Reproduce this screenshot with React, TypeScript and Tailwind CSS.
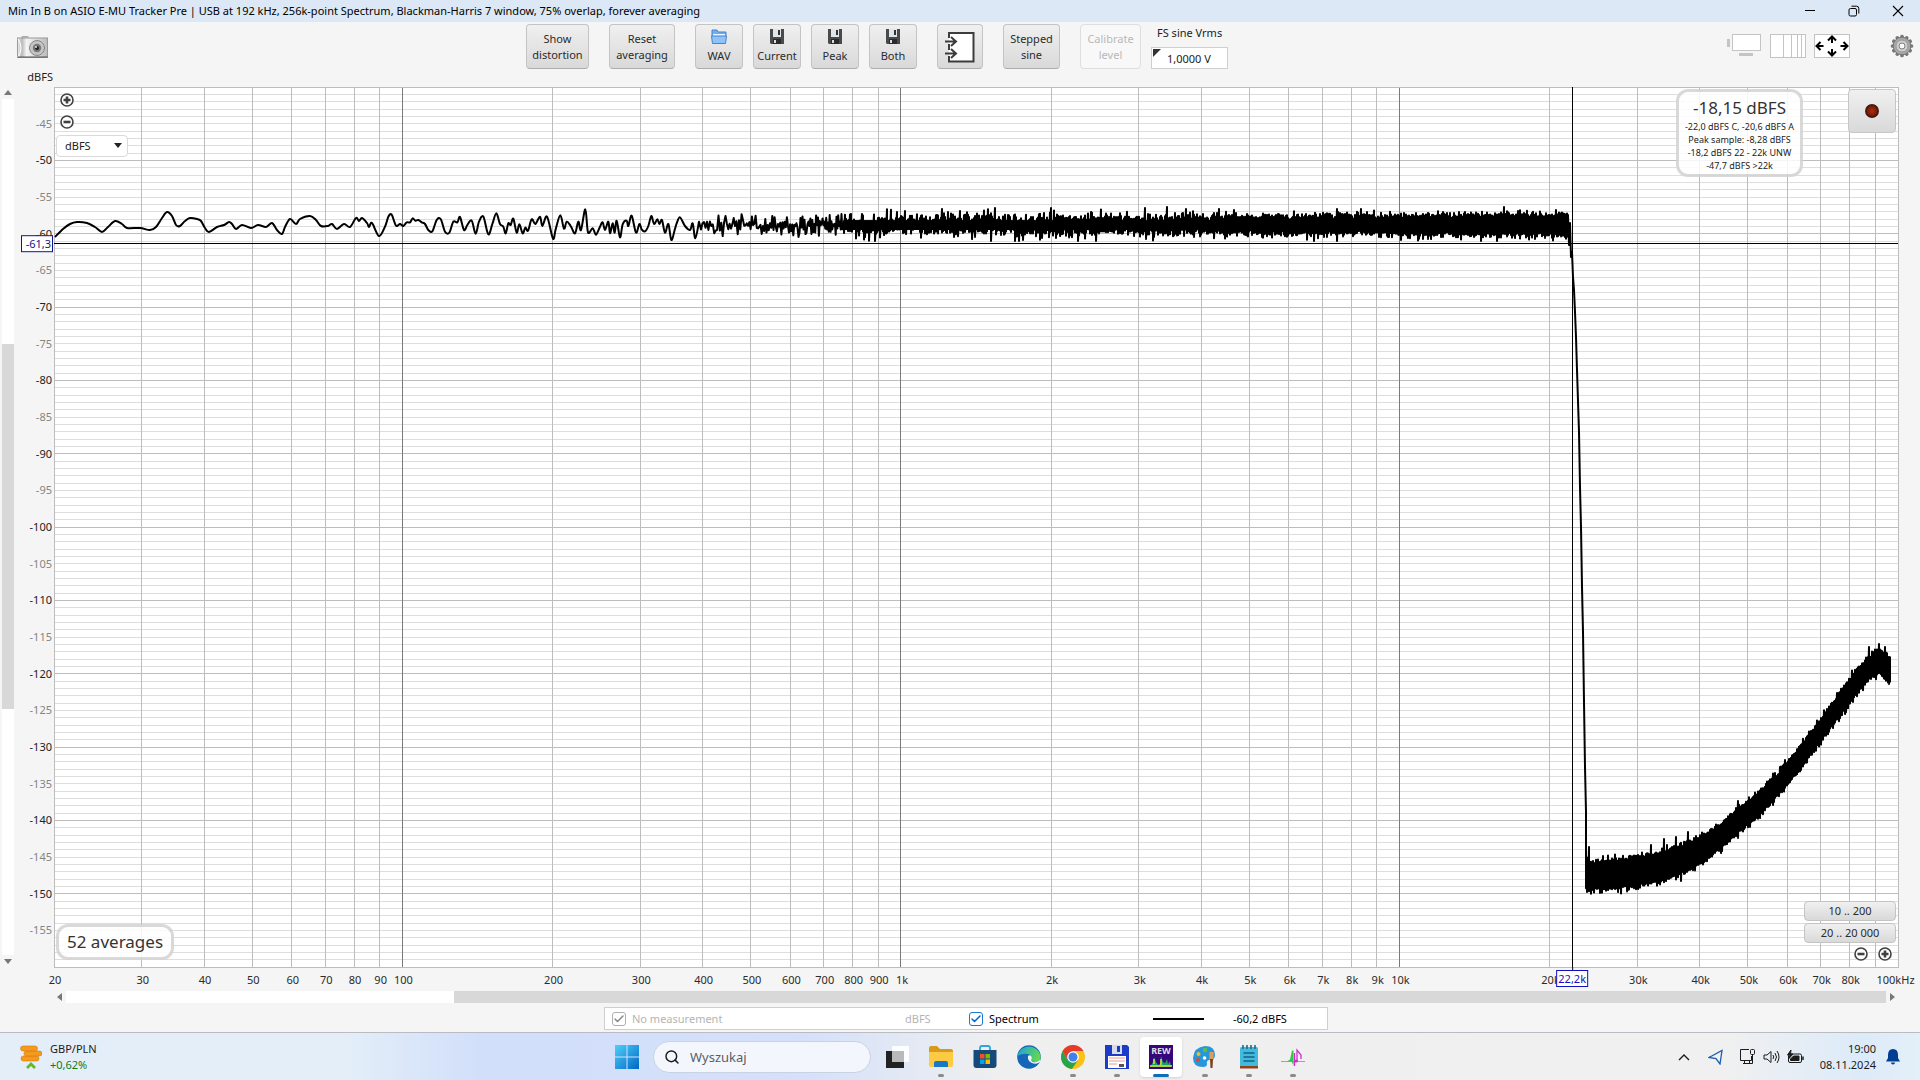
import React from "react";
import { Check, Search } from "lucide-react";

const F_MIN = 20;
const F_MAX = 100000;
const DB_TOP = -40;
const DB_BOTTOM = -160;
const PLOT_W = 1844;
const PLOT_H = 880;

const fx = (f: number) => Math.log10(f / F_MIN) / Math.log10(F_MAX / F_MIN);
const dy = (db: number) => (DB_TOP - db) / (DB_TOP - DB_BOTTOM);
const pct = (v: number) => `${(v * 100).toFixed(3)}%`;

const freqLines = [10, 100, 1000, 10000].flatMap((d) =>
  [1, 2, 3, 4, 5, 6, 7, 8, 9].map((m) => d * m)
).filter((f) => f > 20);

const freqLabels: [number, string][] = [
  [20, "20"], [30, "30"], [40, "40"], [50, "50"], [60, "60"], [70, "70"], [80, "80"], [90, "90"], [100, "100"],
  [200, "200"], [300, "300"], [400, "400"], [500, "500"], [600, "600"], [700, "700"], [800, "800"], [900, "900"],
  [1000, "1k"], [2000, "2k"], [3000, "3k"], [4000, "4k"], [5000, "5k"], [6000, "6k"], [7000, "7k"], [8000, "8k"],
  [9000, "9k"], [10000, "10k"], [20000, "20k"], [30000, "30k"], [40000, "40k"], [50000, "50k"], [60000, "60k"],
  [70000, "70k"], [80000, "80k"], [98400, "100kHz"],
];

const dbLines = Array.from({ length: 119 }, (_, i) => -41 - i);
const dbLabels = Array.from({ length: 23 }, (_, i) => -45 - i * 5);

const lowBand: [number, number][] = [
  [1, 150], [9, 142], [16, 137], [23, 135], [33, 136], [41, 140], [48, 145], [54, 140], [61, 134], [68, 137], [73, 141],
  [86, 141], [96, 143], [102, 140], [108, 131], [113, 125], [118, 129], [122, 138], [126, 139], [131, 134], [136, 131],
  [143, 132], [147, 134], [151, 141], [155, 145], [163, 140], [170, 138], [175, 135], [178, 137], [182, 142], [188, 138],
  [197, 141], [204, 138], [212, 140], [218, 136], [223, 143], [228, 147], [231, 140], [236, 132], [242, 137], [246, 132],
  [256, 129], [262, 133], [267, 139], [274, 139], [278, 137], [283, 142], [290, 137], [296, 140], [302, 131], [305, 134],
  [308, 131], [313, 136], [315, 140], [318, 136], [325, 149],
];
const midBand: [number, number][] = [
  [0, 135], [15, 110], [25, 80], [35, 74], [48, 107], [60, 102], [70, 108], [80, 97], [90, 97], [98, 85], [106, 92],
  [115, 90], [125, 97], [135, 102], [145, 120], [157, 124], [170, 90], [182, 87], [195, 125], [208, 128], [220, 95],
  [232, 97], [240, 81], [252, 120], [262, 105], [275, 92], [287, 131], [297, 95], [310, 80], [325, 133], [337, 102],
  [349, 70], [360, 102], [370, 110], [377, 130], [385, 100], [392, 105], [400, 86], [410, 128], [418, 103], [428, 130],
  [436, 113], [444, 122], [455, 88], [466, 102], [480, 80], [487, 108], [501, 80], [519, 146], [527, 118], [541, 76],
  [552, 116], [560, 95], [572, 108], [585, 130], [595, 95], [603, 120], [616, 58], [624, 127], [638, 115], [648, 134],
  [660, 110], [668, 97], [675, 120], [685, 95], [690, 130], [698, 100], [704, 128], [710, 92], [720, 142], [728, 103],
  [740, 92], [745, 108], [755, 77], [768, 128], [778, 102], [785, 118], [795, 124], [805, 108], [814, 78], [822, 102],
  [832, 88], [838, 102], [846, 90], [855, 128], [865, 102], [874, 150], [884, 120], [890, 100], [900, 82], [915, 108],
  [930, 120], [938, 100], [946, 145], [957, 95],
];
const peaks: Record<number, number> = {
  770: 121, 851: 124, 888: 122, 941: 121, 997: 121, 1037: 125, 1091: 121, 1113: 118, 1132: 122, 1450: 119,
};
const dips: Record<number, number> = { 733: 151, 937: 154, 961: 156, 1024: 156, 1260: 155, 1283: 154 };
const skirt: [number, number][] = [
  [1514, 128], [1515, 158], [1516, 136], [1517, 170], [1518, 165], [1519, 190], [1520, 203], [1521, 225], [1522, 250],
  [1523, 283], [1525, 345], [1526, 400], [1527, 440], [1528, 500], [1529, 545], [1530, 615], [1531, 680], [1532, 725],
];
// x, upper edge, lower edge of the ultrasonic noise floor
const floorBand: [number, number, number][] = [
  [1532, 776, 802], [1556, 774, 801], [1583, 771, 798], [1603, 767, 795], [1623, 761, 788], [1646, 751, 776],
  [1666, 738, 762], [1686, 721, 744], [1706, 705, 728], [1726, 685, 705], [1746, 660, 682], [1766, 634, 655],
  [1786, 606, 628], [1806, 579, 601], [1819, 567, 588], [1826, 563, 586], [1831, 566, 591], [1836, 573, 596],
];
const floorPeaks: Record<number, number> = { 1535: 760, 1597: 758, 1610: 752, 1622: 750, 1634: 745, 1815: 560, 1825: 557 };

function smooth(pts: [number, number][]) {
  let d = `M${pts[0][0]} ${pts[0][1]}`;
  for (let i = 0; i < pts.length - 1; i++) {
    const p0 = pts[Math.max(0, i - 1)];
    const p1 = pts[i];
    const p2 = pts[i + 1];
    const p3 = pts[Math.min(pts.length - 1, i + 2)];
    d += `C${(p1[0] + (p2[0] - p0[0]) / 6).toFixed(1)} ${(p1[1] + (p2[1] - p0[1]) / 6).toFixed(1)} ${(p2[0] - (p3[0] - p1[0]) / 6).toFixed(1)} ${(p2[1] - (p3[1] - p1[1]) / 6).toFixed(1)} ${p2[0]} ${p2[1]}`;
  }
  return d;
}

function buildTrace() {
  let seed = 20241108;
  const rnd = () => {
    seed = (seed * 1664525 + 1013904223) >>> 0;
    return (seed + 1) / 4294967297;
  };
  const gauss = () => Math.sqrt(-2 * Math.log(rnd())) * Math.cos(2 * Math.PI * rnd());
  const head = smooth([
    ...lowBand,
    ...midBand.slice(1).map(([x, y]) => [326 + x / 3, 103 + y / 3] as [number, number]),
  ]);
  let d = head;
  let x0 = 647;
  // individual bins are still visible here, so the trace steps from one random level to the next
  let up = false;
  while (x0 < 790) {
    const v = 138 + (up ? -1 : 1) * Math.abs(gauss()) * 5.8;
    d += `L${x0.toFixed(1)} ${(peaks[x0] ?? Math.max(125, Math.min(150, v))).toFixed(1)}`;
    up = rnd() < 0.15 ? up : !up;
    x0 += 1.5 - ((x0 - 647) / 143) * 0.7;
  }
  for (let x = 790; x <= 1513; x++) {
    const f = F_MIN * Math.pow(F_MAX / F_MIN, x / PLOT_W);
    const n = Math.max(3, Math.round((f * 0.00462) / 1.2));
    const sigma = x < 1100 ? 5.4 - (x - 790) / 310 : 4.4;
    let lo = 999;
    let hi = -999;
    for (let i = 0; i < n; i++) {
      const v = 138 + gauss() * sigma;
      lo = Math.min(lo, v);
      hi = Math.max(hi, v);
    }
    lo = Math.min(Math.max(peaks[x] ?? lo, 120), 134);
    hi = Math.max(Math.min(dips[x] ?? hi, 154), 142);
    d += `L${x} ${lo.toFixed(1)}L${x} ${hi.toFixed(1)}`;
  }
  skirt.forEach(([x, y]) => (d += `L${x} ${y}`));
  let k = 0;
  for (let x = 1532; x <= 1836; x++) {
    while (k < floorBand.length - 2 && x > floorBand[k + 1][0]) k++;
    const [xa, ta, ba] = floorBand[k];
    const [xb, tb, bb] = floorBand[k + 1];
    const t = (x - xa) / (xb - xa);
    const top = floorPeaks[x] ?? ta + (tb - ta) * t + 1 - Math.abs(gauss()) * 2.6;
    const bot = ba + (bb - ba) * t - 1 + Math.abs(gauss()) * 2.6;
    d += `L${x} ${top.toFixed(1)}L${x} ${bot.toFixed(1)}`;
  }
  return d;
}
const trace = buildTrace();

function Plot() {
  return (
    <svg className="absolute inset-0 h-full w-full overflow-visible text-[11px]" role="img" aria-label="Spectrum">
      <rect width="100%" height="100%" fill="#fff" />
      <g shapeRendering="crispEdges">
        {dbLines.map((db) => (
          <line key={db} x1="0" x2="100%" y1={pct(dy(db))} y2={pct(dy(db))} stroke={db % 10 === 0 ? "#bdbdbd" : "#dedede"} />
        ))}
        {freqLines.map((f) => (
          <line key={f} y1="0" y2="100%" x1={pct(fx(f))} x2={pct(fx(f))} stroke={[100, 1000, 10000].includes(f) ? "#7a7a7a" : "#bdbdbd"} />
        ))}
        <rect width="100%" height="100%" fill="none" stroke="#bdbdbd" />
      </g>
      {dbLabels.map((db) => (
        <text key={db} x="-2" y={pct(dy(db))} dy="4" textAnchor="end" fill={db % 10 === 0 ? "#222" : "#858585"}>
          {db}
        </text>
      ))}
      {freqLabels.map(([f, t]) => (
        <svg key={t} x={pct(fx(f))} y="100%" className="overflow-visible">
          <text x="1" y="17" textAnchor="middle" fill="#2a2a2a">{t}</text>
        </svg>
      ))}
      <svg width="100%" height="100%" viewBox={`0 0 ${PLOT_W} ${PLOT_H}`} preserveAspectRatio="none">
        <path d={trace} fill="none" stroke="#000" strokeWidth="2" strokeLinejoin="round" vectorEffect="non-scaling-stroke" />
      </svg>
      <g shapeRendering="crispEdges" stroke="#000">
        <line x1="0" x2="100%" y1={pct(dy(-61.3))} y2={pct(dy(-61.3))} />
        <line y1="0" y2="100%" x1={pct(0.8233)} x2={pct(0.8233)} />
      </g>
      <svg x="0" y={pct(dy(-61.3))} className="overflow-visible">
        <rect x="-32.5" y="-7.5" width="31" height="16" fill="#fff" stroke="#14148c" />
        <text x="-3" y="5" textAnchor="end" fill="#14148c">-61,3</text>
      </svg>
      <svg x={pct(0.8233)} y="100%" className="overflow-visible">
        <path d="M0.5 0v3" stroke="#000" />
        <rect x="-15.5" y="3.5" width="31" height="16" fill="#fff" stroke="#1010c0" />
        <text y="16" textAnchor="middle" fill="#1010c0">22,2k</text>
      </svg>
    </svg>
  );
}

const btn =
  "flex h-[45px] flex-col items-center justify-center rounded border border-[#c4c4c4] border-b-[#adadad] bg-linear-to-b from-[#f0f0f0] to-[#d9d9d9] text-[11px] leading-4 text-[#2b2b2b]";

function Floppy() {
  return (
    <svg viewBox="0 0 14 15" className="h-[15px] w-[14px]" aria-hidden="true">
      <path d="M0 0h14v15H1L0 14z" fill="#4a4a4c" />
      <path d="M3 0h8v8H3z" fill="#dfe6ea" />
      <path d="M8 1h2v5H8z" fill="#333" />
      <path d="M3 10h8v5H3z" fill="#2b2b2b" />
      <path d="M4 11h2v3H4z" fill="#ddd" />
    </svg>
  );
}

function CircleButton({ kind, label }: { kind: "plus" | "minus"; label: string }) {
  return (
    <button aria-label={label} className="block rounded-full bg-white">
      <svg viewBox="0 0 14 14" className="h-3.5 w-3.5">
        <circle cx="7" cy="7" r="6" fill="#fff" stroke="#404040" strokeWidth="1.6" />
        <path d={kind === "plus" ? "M3.5 7h7M7 3.5v7" : "M3.5 7h7"} stroke="#404040" strokeWidth="2.6" />
      </svg>
    </button>
  );
}

function TitleBar() {
  return (
    <header className="flex h-[22px] items-center justify-between bg-[#dce8f6] pr-4 pl-2 text-black">
      <h1 className="text-[11px] leading-4">
        Min In B on ASIO E-MU Tracker Pre | USB at 192 kHz, 256k-point Spectrum, Blackman-Harris 7 window, 75% overlap, forever averaging
      </h1>
      <div className="flex gap-8">
        <button aria-label="Minimize">
          <svg viewBox="0 0 12 12" className="h-3 w-3"><path d="M1 5.500h10" stroke="#000" /></svg>
        </button>
        <button aria-label="Restore">
          <svg viewBox="0 0 12 12" className="h-3 w-3" fill="none" stroke="#000"><rect x="1" y="3.5" width="7.5" height="7.5" rx="1.5" /><path d="M3.5 1.2H8.500a2.300 2.300 0 0 1 2.300 2.300v5" /></svg>
        </button>
        <button aria-label="Close">
          <svg viewBox="0 0 12 12" className="h-3 w-3"><path d="M1 1l10 10M11 1L1 11" stroke="#000" strokeWidth="1.1" /></svg>
        </button>
      </div>
    </header>
  );
}

function Toolbar() {
  return (
    <div className="flex h-[65px] items-start pt-0.5">
      <div className="w-12 pt-3 pl-[17px]">
        <button aria-label="Capture graph" className="block">
          <svg viewBox="0 0 31 22" className="h-[22px] w-[31px]">
            <defs>
              <linearGradient id="cam" x2="1"><stop offset="0" stopColor="#eee" /><stop offset=".15" stopColor="#bbb" /><stop offset=".3" stopColor="#f4f4f4" /><stop offset="1" stopColor="#bcbcbc" /></linearGradient>
            </defs>
            <path d="M5 2V.5h6V2" fill="#ccc" stroke="#aaa" />
            <rect x=".5" y="2" width="30" height="19.500" fill="url(#cam)" stroke="#999" />
            <path d="M1 3q6 9 0 18" fill="none" stroke="#fff" />
            <path d="M1 21h29.500" stroke="#555" />
            <circle cx="20" cy="12" r="7.500" fill="#c4c4c4" stroke="#888" />
            <circle cx="20" cy="12" r="4.200" fill="#777" />
            <circle cx="20" cy="12" r="2" fill="#222" />
            <circle cx="19" cy="11" r=".9" fill="#fff" />
          </svg>
        </button>
      </div>
      <div className="flex flex-1 justify-center">
        <button className={`${btn} w-[63px]`}><span>Show</span><span>distortion</span></button>
        <button className={`${btn} ml-5 w-[66px]`}><span>Reset</span><span>averaging</span></button>
        <div className="mx-5 flex gap-2.5">
          <button className={`${btn} w-12 gap-1`}>
            <svg viewBox="0 0 16 15" className="h-[15px] w-4" aria-hidden="true">
              <path d="M1 1h5l1 2h8v5H1z" fill="#72aef2" stroke="#4584cf" />
              <path d="M2 5h12v4H2z" fill="#e6f2ff" />
              <path d="M.5 7h15l-1 7.500h-13z" fill="#8ec2f8" stroke="#4584cf" />
            </svg>
            WAV
          </button>
          <button className={`${btn} w-12 gap-1`}><Floppy />Current</button>
          <button className={`${btn} w-12 gap-1`}><Floppy />Peak</button>
          <button className={`${btn} w-12 gap-1`}><Floppy />Both</button>
        </div>
        <button className={`${btn} w-[46px]`} aria-label="Import">
          <svg viewBox="0 0 30 32" className="h-8 w-[30px]" fill="none" stroke="#3c3c3c" strokeWidth="2">
            <path d="M4 7V2h24.500v28.500H4V25" fill="#fff" />
            <path d="M4 13v6" />
            <path d="M0 10.500h10M6 6l5 4.500L6 15M0 22.500h10M6 18l5 4.500L6 27" />
          </svg>
        </button>
        <button className={`${btn} mx-5 w-[57px]`}><span>Stepped</span><span>sine</span></button>
        <button disabled className="h-[45px] w-[61px] rounded border border-[#dedede] bg-[#f8f8f8] text-[11px] leading-4 text-[#b9b9b9]">
          Calibrate<br />level
        </button>
        <div className="ml-2.5 flex h-[45px] w-[77px] flex-col justify-between">
          <label htmlFor="vrms" className="pl-1.5 text-[11px] leading-[18px] whitespace-nowrap text-[#222]">FS sine Vrms</label>
          <div className="relative">
            <input id="vrms" defaultValue="1,0000 V" className="block h-[22px] w-full border border-[#cfcfcf] bg-white pl-[15px] text-[11px] text-[#222] outline-none" />
            <svg viewBox="0 0 8 8" className="absolute top-0.5 left-0.5 h-2 w-2" aria-hidden="true"><path d="M0 0h8L0 8z" fill="#333" /></svg>
          </div>
        </div>
      </div>
      <div className="flex w-[214px] items-start justify-end gap-2 pt-2.5 pr-1.5">
        <button aria-label="Hide labels">
          <svg viewBox="0 0 35 24" className="h-6 w-[35px]"><path d="M0 5h3v8H0zM12 19h14v3H12z" fill="#c4c4c4" /><rect x="5.500" y=".5" width="28" height="16" fill="#fff" stroke="#c4c4c4" /></svg>
        </button>
        <button aria-label="Frequency axis">
          <svg viewBox="0 0 36 24" className="h-6 w-9"><rect x=".5" y=".5" width="35" height="23" fill="#fff" stroke="#c4c4c4" /><path d="M13.500 0v24M21.500 0v24M27.500 0v24M31.500 0v24" stroke="#c4c4c4" /></svg>
        </button>
        <button aria-label="Graph limits">
          <svg viewBox="0 0 36 24" className="h-6 w-9">
            <rect x=".5" y=".5" width="35" height="23" fill="#fff" stroke="#c4c4c4" />
            <path d="M9.500 12H3m3.500-4L2.500 12l4 4M26.500 12H33m-3.500-4 4 4-4 4M18 9V3m-4 3.500 4-4 4 4M18 15v6m-4-3.500 4 4 4-4" fill="none" stroke="#000" strokeWidth="2" />
          </svg>
        </button>
        <button aria-label="Settings" className="ml-8">
          <svg viewBox="-12 -12 24 24" className="h-6 w-6">
            <g fill="#777">
              {[0, 30, 60, 90, 120, 150].map((a) => (
                <rect key={a} x="-1.800" y="-11.200" width="3.600" height="22.400" rx="1.500" transform={`rotate(${a})`} />
              ))}
            </g>
            <circle r="8.800" fill="#a8a8a8" stroke="#777" />
            <circle r="6" fill="#cfcfcf" stroke="#989898" />
            <circle r="3" fill="#fafafa" stroke="#808080" />
          </svg>
        </button>
      </div>
    </div>
  );
}

function Chart() {
  return (
    <div className="flex min-h-0 flex-1">
      <div className="flex w-3.5 flex-col items-center pl-0.5">
        <svg viewBox="0 0 8 12" className="h-3 w-2" aria-hidden="true"><path d="M0 8l4-5 4 5z" fill="#777" /></svg>
        <div className="flex w-full flex-1 flex-col bg-white">
          <div className="flex-[245]" />
          <div className="flex-[365] bg-[#d8d8d8]" />
          <div className="flex-[246]" />
        </div>
        <svg viewBox="0 0 8 12" className="h-3 w-2" aria-hidden="true"><path d="M0 4l4 5 4-5z" fill="#777" /></svg>
      </div>
      <div className="relative w-10">
        <span className="absolute right-px bottom-full mb-0.5 text-[11px] leading-4 text-[#222]">dBFS</span>
      </div>
      <div className="relative flex-1">
        <Plot />
        <div className="absolute top-1.5 left-0.5 flex flex-col items-start">
          <div className="flex flex-col gap-2 pl-1">
            <CircleButton kind="plus" label="Zoom in vertically" />
            <CircleButton kind="minus" label="Zoom out vertically" />
          </div>
          <div className="relative mt-1.5">
            <select aria-label="Y axis unit" className="block h-[22px] w-[72px] appearance-none rounded border border-[#dadada] bg-white pl-2 text-[11px] text-[#222] outline-none">
              <option>dBFS</option>
            </select>
            <svg viewBox="0 0 8 5" className="pointer-events-none absolute top-2 right-1.5 h-[5px] w-2"><path d="M0 0h8L4 5z" fill="#222" /></svg>
          </div>
        </div>
        <div className="absolute bottom-[7px] left-0.5 flex h-9 items-center rounded-xl border-3 border-black/15 bg-white/85 px-2 text-[17px] text-[#333]">
          52 averages
        </div>
        <div className="absolute top-0.5 right-[95px] flex h-[88px] w-[127px] flex-col items-center rounded-xl border-3 border-black/15 bg-white/85 pt-1 text-[9px] leading-[13px] whitespace-nowrap text-[#222]">
          <strong className="text-[17px] leading-6 font-normal text-[#333]">-18,15 dBFS</strong>
          <span>-22,0 dBFS C, -20,6 dBFS A</span>
          <span>Peak sample: -8,28 dBFS</span>
          <span>-18,2 dBFS 22 - 22k UNW</span>
          <span>-47,7 dBFS &gt;22k</span>
        </div>
        <button aria-label="Record" className="absolute top-0.5 right-0.5 flex h-11 w-12 items-center justify-center rounded border border-[#c6c6c6] bg-linear-to-b from-[#f0f0f0] to-[#d9d9d9]">
          <span className="h-3.5 w-3.5 rounded-full border-2 border-[#4a1a10] bg-radial from-[#a83010] to-[#6b1200]" />
        </button>
        <div className="absolute right-0.5 bottom-1.5 flex w-[92px] flex-col gap-0.5 text-[11px] text-[#2b2b2b]">
          <button className="h-5 rounded border border-[#c4c4c4] bg-linear-to-b from-[#f0f0f0] to-[#d9d9d9] leading-4">10 .. 200</button>
          <button className="h-5 rounded border border-[#c4c4c4] bg-linear-to-b from-[#f0f0f0] to-[#d9d9d9] leading-4">20 .. 20 000</button>
          <div className="mt-0.5 flex justify-end gap-2.5 pr-1">
            <CircleButton kind="minus" label="Zoom out horizontally" />
            <CircleButton kind="plus" label="Zoom in horizontally" />
          </div>
        </div>
      </div>
      <div className="w-[22px]" />
    </div>
  );
}

function Legend() {
  return (
    <div className="mt-1 mb-0.5 flex justify-center pl-3">
      <div className="flex h-[23px] w-[724px] items-center border border-[#cfcfcf] bg-white px-[7px] text-[11px] leading-4">
        <label className="flex w-[293px] items-center gap-1.5 text-[#b4b4b4]">
          <Tick tone="border-[#b0b0b0] text-[#8a8a8a]" disabled />
          No measurement
        </label>
        <span className="w-[64px] text-[#b4b4b4]">dBFS</span>
        <label className="flex w-[184px] items-center gap-1.5 text-black">
          <Tick tone="border-[#1a7ad4] text-[#0067c5]" />
          Spectrum
        </label>
        <svg viewBox="0 0 51 2" className="mr-[29px] h-0.5 w-[51px]" aria-hidden="true"><path d="M0 1h51" stroke="#000" strokeWidth="2" /></svg>
        <span className="text-black">-60,2 dBFS</span>
      </div>
    </div>
  );
}

function Tick({ tone, disabled }: { tone: string; disabled?: boolean }) {
  return (
    <span className={`relative h-3.5 w-3.5 rounded-[3px] border bg-white ${tone}`}>
      <input type="checkbox" defaultChecked disabled={disabled} className="absolute inset-0 appearance-none" />
      <Check className="pointer-events-none h-3 w-3" strokeWidth={3} />
    </span>
  );
}

const appIcons: { name: string; state?: "open" | "active"; art: React.ReactNode }[] = [
  { name: "Widok zadań", art: <><rect x="1" y="6" width="18" height="17" fill="#222" /><rect x="7" y="1" width="17" height="16" fill="#fff" opacity=".9" /><rect x="7" y="6" width="12" height="11" fill="#b9b9b9" /></> },
  { name: "Eksplorator plików", state: "open", art: <><path d="M0 3q0-2 2-2h6l3 3h11q2 0 2 2v4H0z" fill="#d99a1c" /><path d="M0 7h24v13q0 2-2 2H2q-2 0-2-2z" fill="#fccb43" /><path d="M5 22v-4q0-2 2-2h10q2 0 2 2v4z" fill="#1878c8" /></> },
  { name: "Microsoft Store", art: <><path d="M7 5V3q0-2 2-2h6q2 0 2 2v2" fill="none" stroke="#2fa5de" strokeWidth="1.800" /><path d="M.5 5h23v15q0 3-3 3h-17q-3 0-3-3z" fill="#15497c" /><path d="M7 9h4.500v4.500H7z" fill="#f25022" /><path d="M12.500 9H17v4.500h-4.500z" fill="#7fba00" /><path d="M7 14.500h4.500V19H7z" fill="#00a4ef" /><path d="M12.500 14.500H17V19h-4.500z" fill="#ffb900" /></> },
  { name: "Microsoft Edge", art: <><defs><linearGradient id="edge" x2="1" y2=".3"><stop offset="0" stopColor="#1c9fe0" /><stop offset="1" stopColor="#5fd655" /></linearGradient></defs><circle cx="12" cy="12" r="11.800" fill="#1565b8" /><path d="M.3 11A12 12 0 0 1 23.800 11q0 6-6 6-4 0-3.500-3 1-2.500-1-4-5-3-13 1z" fill="url(#edge)" /><path d="M23 17q-4 3-8 1-5-2.500-4-7 2-1.500 3.500.5 1 1.500-.2 3 0 3.500 4.500 2.500 2.500-.5 4-2 1 1 .2 2z" fill="#f1f4f8" /></> },
  { name: "Google Chrome", state: "open", art: <><circle cx="12" cy="12" r="12" fill="#fbc116" /><path d="M1.600 6l5.200 9 5.200 0-1.200 9A12 12 0 0 1 1.600 6z" fill="#2ba24c" /><path d="M10.800 24l6.400-9H6.800z" fill="#2ba24c" /><path d="M1.600 6l5.200 9L12 6h10.400A12 12 0 0 0 1.600 6z" fill="#e33b2e" /><circle cx="12" cy="12" r="5.800" fill="#fff" /><circle cx="12" cy="12" r="4.500" fill="#3f7fee" /></> },
  { name: "Total Commander", state: "open", art: <><path d="M0 0h22l2 2v22H0z" fill="#1c3cc8" /><path d="M7 0h10v9H7z" fill="#d5dce8" /><path d="M12 1h3v6h-3z" fill="#1c3cc8" /><path d="M3 11h18v12H3z" fill="#fff" /><path d="M4 13h16M4 16h16M4 19h8" stroke="#e79a9a" strokeWidth="1.200" /><path d="M14 19h5v3h-5z" fill="#555" /></> },
  { name: "REW", state: "active", art: <><path d="M0 0h24v24H0z" fill="#35067c" /><path d="M1 22q2-3 3-5l1-5 2 5 2 3 2-1 1-8 2 6 2 1 2-4 1 5 2-3 1 6z" fill="#1a9f62" /><path d="M1 21h22M5 14v5M12 14v6" stroke="#d9e338" strokeWidth="1.500" /><text x="12" y="9" textAnchor="middle" fontSize="9" fontWeight="700" fill="#ddd">REW</text></> },
  { name: "Paint", state: "open", art: <><path d="M12 1q10 0 10 9 0 5-5 5-4 0-3 4 0 3-4 3Q0 22 0 13 1 2 12 1z" fill="#2797dc" /><circle cx="12" cy="5" r="2.300" fill="#62bd3e" /><circle cx="5.500" cy="9" r="2" fill="#eabb2c" /><circle cx="5" cy="15" r="2" fill="#df4730" /><circle cx="11.500" cy="13" r="1.800" fill="#fff" /><path d="M16.500 7h4v8h-4z" fill="#dca05c" /><path d="M17 14h3l-.500 9h-2z" fill="#774222" /></> },
  { name: "Notatnik", state: "open", art: <><rect x="3" y="2" width="18" height="20" rx="1.500" fill="#42b9dd" /><path d="M3 21h18v2.500H3z" fill="#8f4317" /><path d="M6 0v4M10 0v4M14 0v4M18 0v4" stroke="#176d94" strokeWidth="1.600" /><path d="M6.500 8h11M6.500 12h11M6.500 16h11" stroke="#12617f" strokeWidth="1.600" /></> },
  { name: "Generator", state: "open", art: <><path d="M0 16.500h24" stroke="#6cc86f" /><path d="M6 16.500l3-2 2-9h1.500v15l-2-4z" fill="#30c848" /><path d="M13.500 21V8M16 16V5l4 5v4" fill="none" stroke="#d22bd0" strokeWidth="1.300" /><ellipse cx="15" cy="16" rx="2" ry="1.600" fill="#d22bd0" /></> },
];

function Taskbar() {
  return (
    <footer className="h-12 border-t border-[#b9bcc2] text-[11px] leading-4 text-[#1b1b1b]">
      <div className="grid h-full grid-cols-[1fr_auto_1fr] items-center bg-[linear-gradient(90deg,#e3eef8_0%,#e3eef8_18%,#d2dffa_25%,#d5e1fa_42%,#efefef_52%,#f0f0f0_90%,#dcebf9_97%,#e4eff8_100%)]">
        <a href="#rates" className="flex items-center gap-2 pl-5">
          <svg viewBox="0 0 22 24" className="h-6 w-[22px]" aria-hidden="true">
            <g fill="#f39a1f" stroke="#d97b0c" strokeWidth=".6">
              <rect x="1" y="11" width="18" height="5" rx="2.500" />
              <rect x="4" y="6" width="18" height="5" rx="2.500" />
              <rect x=".5" y="1" width="17" height="5" rx="2.500" />
            </g>
            <path d="M7 23l4-4 4 4" fill="none" stroke="#62b82e" strokeWidth="2.800" />
          </svg>
          <span className="flex flex-col">
            <span>GBP/PLN</span>
            <span className="text-[#117a17]">+0,62%</span>
          </span>
        </a>
        <nav className="flex items-center pl-2.5" aria-label="Taskbar">
          <button aria-label="Start" className="mr-3.5">
            <svg viewBox="0 0 24 24" className="h-6 w-6">
              <defs><linearGradient id="win" x2="1" y2="1"><stop offset="0" stopColor="#4fd0fb" /><stop offset="1" stopColor="#0067c4" /></linearGradient></defs>
              <path d="M0 0h11.500v11.500H0zM12.500 0H24v11.500H12.500zM0 12.500h11.500V24H0zM12.500 12.500H24V24H12.500z" fill="url(#win)" />
            </svg>
          </button>
          <label className="mr-1 flex h-8 w-[218px] items-center gap-2.5 rounded-full border border-[#c9d2e2] bg-[#f3f7fd] pl-2.5">
            <Search className="h-4 w-4 text-[#1b1b1b]" strokeWidth={2.2} />
            <input aria-label="Wyszukaj" placeholder="Wyszukaj" className="w-40 bg-transparent text-[13px] outline-none placeholder:text-[#5a5e66]" />
          </label>
          {appIcons.map((app) => (
            <button
              key={app.name}
              aria-label={app.name}
              className={`relative mx-px flex h-10 w-[42px] items-center justify-center rounded ${app.state === "active" ? "bg-white shadow-sm" : ""}`}
            >
              <svg viewBox="0 0 24 24" className="h-6 w-6">{app.art}</svg>
              {app.state && (
                <span className={`absolute bottom-0 h-[3px] rounded-full ${app.state === "active" ? "w-4 bg-[#0f6cbd]" : "w-1.5 bg-[#8a8a8a]"}`} />
              )}
            </button>
          ))}
        </nav>
        <div className="flex items-center justify-end pr-5">
          <button aria-label="Ukryte ikony" className="mr-[18px]">
            <svg viewBox="0 0 12 8" className="h-2 w-3"><path d="M1 7l5-5 5 5" fill="none" stroke="#1b1b1b" strokeWidth="1.400" /></svg>
          </button>
          <svg viewBox="0 0 16 16" className="mr-[15px] h-4 w-4" role="img" aria-label="Lokalizacja"><path d="M1 8.500L14 1.500l-2 13.500L8 9.500z" fill="none" stroke="#1b5eae" strokeWidth="1.300" /></svg>
          <svg viewBox="0 0 17 17" className="mr-[7px] h-[17px] w-[17px]" fill="none" stroke="#1b1b1b" role="img" aria-label="Sieć"><path d="M10 1.500H1.500v11h11V8M4 15.500h8M5.500 12.500v3M10.500 12.500v3" /><rect x="11.500" y="1.500" width="4" height="5" rx="1" /><path d="M13.500 6.500v9H12" /></svg>
          <svg viewBox="0 0 17 16" className="mr-[7px] h-4 w-[17px]" fill="none" stroke="#1b1b1b" role="img" aria-label="Głośność"><path d="M1 6h3l4-3.500v11L4 10H1zM10 6q1.500 2 0 4M12 4q3 4 0 8M14 2q4 6 0 12" /></svg>
          <svg viewBox="0 0 17 14" className="mr-4 h-3.5 w-[17px]" fill="none" stroke="#1b1b1b" role="img" aria-label="Bateria"><rect x="1.500" y="4" width="13" height="8.500" rx="1.500" /><path d="M6.500 6H12v4.500H3.500V9z" fill="#1b1b1b" /><path d="M16 6.500v3.500" strokeWidth="1.500" /><path d="M4 0L.5 5H3L2 8.500 6 4H3.500z" fill="#1b1b1b" /></svg>
          <div className="mr-2.5 flex flex-col text-right">
            <span>19:00</span>
            <span>08.11.2024</span>
          </div>
          <button aria-label="Powiadomienia">
            <svg viewBox="0 0 14 16" className="h-4 w-3.5"><path d="M7 0q5 0 5 6v3l2 3.500H0L2 9V6q0-6 5-6zM5 13.500h4q0 2-2 2t-2-2z" fill="#003e92" /></svg>
          </button>
        </div>
      </div>
    </footer>
  );
}

export default function App() {
  return (
    <div className="flex h-screen flex-col overflow-hidden bg-[#f5f5f5] font-['Noto_Sans','Open_Sans',sans-serif]">
      <TitleBar />
      <Toolbar />
      <Chart />
      <div className="mt-[23px] flex h-[13px] items-center pr-[22px] pl-[54px]">
        <svg viewBox="0 0 12 8" className="h-2 w-3" aria-hidden="true"><path d="M8 0v8L3 4z" fill="#777" /></svg>
        <div className="flex h-3 flex-1 bg-white">
          <div className="flex-[388]" />
          <div className="flex-[1432] bg-[#d8d8d8]" />
        </div>
        <svg viewBox="0 0 12 8" className="h-2 w-3" aria-hidden="true"><path d="M4 0v8l5-4z" fill="#777" /></svg>
      </div>
      <Legend />
      <Taskbar />
    </div>
  );
}
